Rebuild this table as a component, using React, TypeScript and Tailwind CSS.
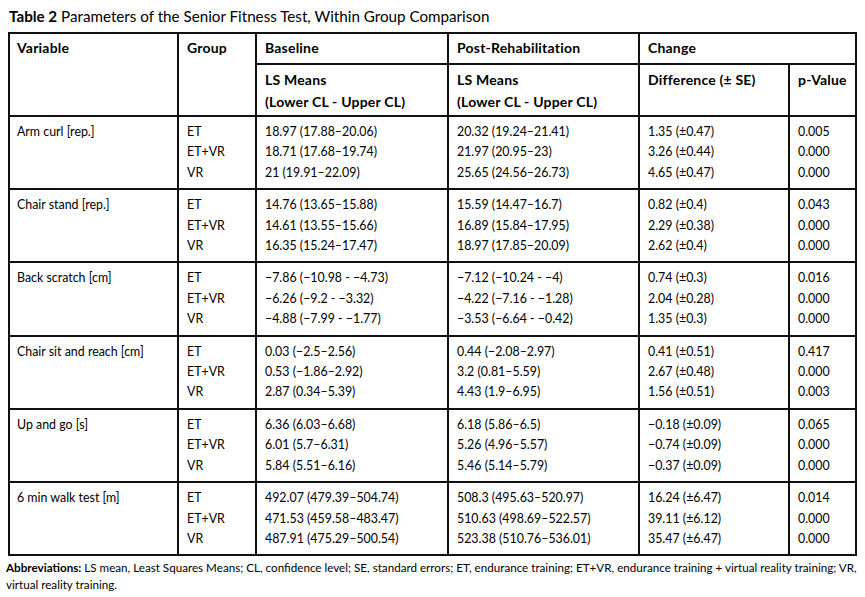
import React from "react";

type Group = {
  variable: string;
  baseline: string[];
  post: string[];
  diff: string[];
  p: string[];
};

const groups: Group[] = [
  {
    variable: "Arm curl [rep.]",
    baseline: ["18.97 (17.88–20.06)", "18.71 (17.68–19.74)", "21 (19.91–22.09)"],
    post: ["20.32 (19.24–21.41)", "21.97 (20.95–23)", "25.65 (24.56–26.73)"],
    diff: ["1.35 (±0.47)", "3.26 (±0.44)", "4.65 (±0.47)"],
    p: ["0.005", "0.000", "0.000"],
  },
  {
    variable: "Chair stand [rep.]",
    baseline: ["14.76 (13.65–15.88)", "14.61 (13.55–15.66)", "16.35 (15.24–17.47)"],
    post: ["15.59 (14.47–16.7)", "16.89 (15.84–17.95)", "18.97 (17.85–20.09)"],
    diff: ["0.82 (±0.4)", "2.29 (±0.38)", "2.62 (±0.4)"],
    p: ["0.043", "0.000", "0.000"],
  },
  {
    variable: "Back scratch [cm]",
    baseline: ["−7.86 (−10.98 - −4.73)", "−6.26 (−9.2 - −3.32)", "−4.88 (−7.99 - −1.77)"],
    post: ["−7.12 (−10.24 - −4)", "−4.22 (−7.16 - −1.28)", "−3.53 (−6.64 - −0.42)"],
    diff: ["0.74 (±0.3)", "2.04 (±0.28)", "1.35 (±0.3)"],
    p: ["0.016", "0.000", "0.000"],
  },
  {
    variable: "Chair sit and reach [cm]",
    baseline: ["0.03 (−2.5–2.56)", "0.53 (−1.86–2.92)", "2.87 (0.34–5.39)"],
    post: ["0.44 (−2.08–2.97)", "3.2 (0.81–5.59)", "4.43 (1.9–6.95)"],
    diff: ["0.41 (±0.51)", "2.67 (±0.48)", "1.56 (±0.51)"],
    p: ["0.417", "0.000", "0.003"],
  },
  {
    variable: "Up and go [s]",
    baseline: ["6.36 (6.03–6.68)", "6.01 (5.7–6.31)", "5.84 (5.51–6.16)"],
    post: ["6.18 (5.86–6.5)", "5.26 (4.96–5.57)", "5.46 (5.14–5.79)"],
    diff: ["−0.18 (±0.09)", "−0.74 (±0.09)", "−0.37 (±0.09)"],
    p: ["0.065", "0.000", "0.000"],
  },
  {
    variable: "6 min walk test [m]",
    baseline: ["492.07 (479.39–504.74)", "471.53 (459.58–483.47)", "487.91 (475.29–500.54)"],
    post: ["508.3 (495.63–520.97)", "510.63 (498.69–522.57)", "523.38 (510.76–536.01)"],
    diff: ["16.24 (±6.47)", "39.11 (±6.12)", "35.47 (±6.47)"],
    p: ["0.014", "0.000", "0.000"],
  },
];

const Lines = ({ items }: { items: string[] }) => (
  <>
    {items.map((t, i) => (
      <div key={i} className="whitespace-nowrap">
        {t}
      </div>
    ))}
  </>
);

export default function App() {
  const th = "border-2 border-[#111] align-top text-left font-bold text-[14px] tracking-[0.2px] px-2";
  const td = "border-2 border-[#111] align-top px-2 pt-[5px] pb-[5px] text-[12.4px] leading-[20.4px]";
  return (
    <div
      className="bg-white text-black w-[865px] h-[597px] overflow-hidden"
      style={{ fontFamily: "Lato, 'Open Sans', sans-serif" }}
    >
      <div className="pl-[9px] pt-[6px] text-[15.2px] leading-[20px]">
        <span className="font-bold">Table 2</span> Parameters of the Senior Fitness Test, Within Group Comparison
      </div>
      <table className="ml-[8px] mt-[6px] table-fixed border-collapse w-[849px]">
        <colgroup>
          <col className="w-[169px]" />
          <col className="w-[78px]" />
          <col className="w-[192px]" />
          <col className="w-[191px]" />
          <col className="w-[150px]" />
          <col className="w-[67px]" />
        </colgroup>
        <thead>
          <tr>
            <th rowSpan={2} className={`${th} pl-[7px] pt-[4px] leading-[20px]`}>
              Variable
            </th>
            <th rowSpan={2} className={`${th} pt-[4px] leading-[20px]`}>
              Group
            </th>
            <th className={`${th} pt-[4px] pb-[5px] leading-[20px]`}>Baseline</th>
            <th className={`${th} pt-[4px] pb-[5px] leading-[20px]`}>Post-Rehabilitation</th>
            <th colSpan={2} className={`${th} pt-[4px] pb-[5px] leading-[20px]`}>
              Change
            </th>
          </tr>
          <tr>
            <th className={`${th} pt-[4px] pb-[3px] leading-[21.5px]`}>
              LS Means
              <br />
              (Lower CL - Upper CL)
            </th>
            <th className={`${th} pt-[4px] pb-[3px] leading-[21.5px]`}>
              LS Means
              <br />
              (Lower CL - Upper CL)
            </th>
            <th className={`${th} pt-[4px] pb-[3px] leading-[21.5px] whitespace-nowrap`}>Difference (± SE)</th>
            <th className={`${th} pt-[4px] pb-[3px] leading-[21.5px] whitespace-nowrap`}>p-Value</th>
          </tr>
        </thead>
        <tbody>
          {groups.map((g) => (
            <tr key={g.variable}>
              <td className={`${td} pl-[7px] whitespace-nowrap`}>{g.variable}</td>
              <td className={td}>
                <Lines items={["ET", "ET+VR", "VR"]} />
              </td>
              <td className={td}>
                <Lines items={g.baseline} />
              </td>
              <td className={td}>
                <Lines items={g.post} />
              </td>
              <td className={td}>
                <Lines items={g.diff} />
              </td>
              <td className={td}>
                <Lines items={g.p} />
              </td>
            </tr>
          ))}
        </tbody>
      </table>
      <div className="pl-[6px] mt-[4px] text-[11.65px] leading-[16.5px]">
        <div className="whitespace-nowrap">
          <span className="font-bold">Abbreviations:</span> LS mean, Least Squares Means; CL, confidence level; SE,
          standard errors; ET, endurance training; ET+VR, endurance training + virtual reality training; VR,
        </div>
        <div>virtual reality training.</div>
      </div>
    </div>
  );
}
